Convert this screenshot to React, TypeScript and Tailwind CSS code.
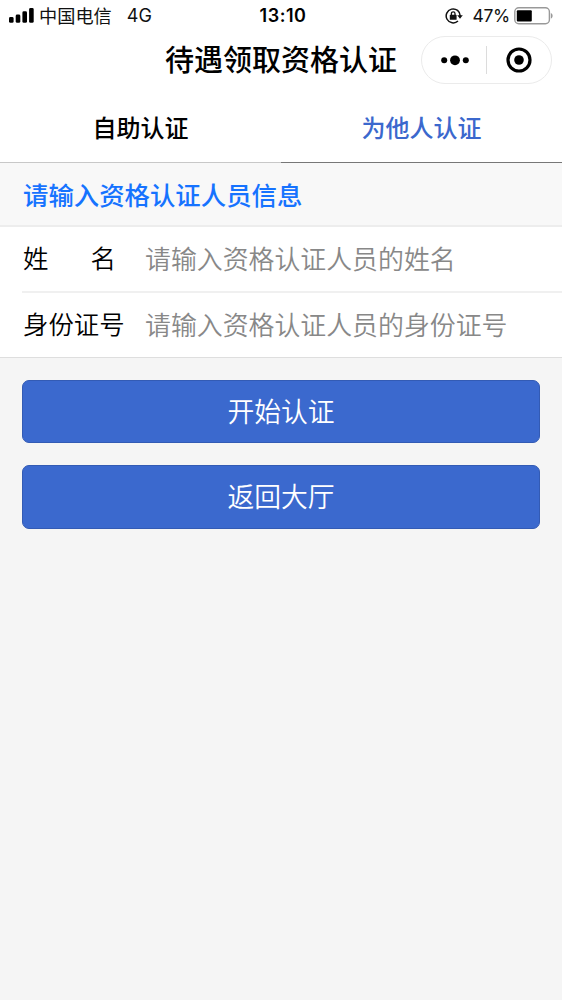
import React from 'react';

const fields = [
  { id: 'name', label: ['姓', '名'], placeholder: '请输入资格认证人员的姓名' },
  { id: 'idNumber', label: ['身份证号'], placeholder: '请输入资格认证人员的身份证号' },
];

const StatusBar: React.FC = () => (
  <div className="h-8 flex items-center justify-between pl-[9px] pr-2 text-[18px] leading-8 text-[#111]">
    <div className="w-[240px] flex items-center">
      <svg width="25" height="16" viewBox="0 0 25 16" fill="#000">
        <rect x="0" y="9" width="4.6" height="5.8" rx="1.4" />
        <rect x="6.7" y="6.5" width="4.6" height="8.3" rx="1.4" />
        <rect x="13.4" y="3.3" width="4.6" height="11.5" rx="1.4" />
        <rect x="20.1" y="0" width="4.6" height="14.8" rx="1.4" />
      </svg>
      <span className="ml-[5px] text-[18.2px]">中国电信</span>
      <span className="ml-[15px] text-[18px]">4G</span>
    </div>
    <span className="pl-[3px] text-[18px] font-semibold text-black tracking-[0.5px]">13:10</span>
    <div className="w-[240px] flex items-center justify-end">
      <svg className="-mt-px" width="18" height="16" viewBox="0 0 18 16" fill="none" stroke="#111" strokeWidth="1.5">
        <path d="M15.2 8.5V8A7 7 0 1 0 13 13" />
        <path d="M12.2 7.2h5.6L15 10.7z" fill="#111" stroke="none" />
        <rect x="4.8" y="6.8" width="6.8" height="5" rx="0.6" fill="#111" stroke="none" />
        <path d="M6.4 7.2V5.6a1.8 1.8 0 0 1 3.6 0v1.6" strokeWidth="1.3" />
      </svg>
      <span className="ml-[9px] text-[17.5px] tracking-[-0.3px]">47%</span>
      <svg className="ml-1 -mt-px" width="40" height="18" viewBox="0 0 40 18">
        <rect x="0.8" y="0.8" width="34.6" height="16" rx="4" fill="#fff" stroke="#999" strokeWidth="1.4" />
        <rect x="2.8" y="3.2" width="15" height="11.2" rx="1" fill="#000" />
        <path d="M36.8 6c2.4 0.8 2.4 4.8 0 5.6z" fill="#999" />
      </svg>
    </div>
  </div>
);

const NavBar: React.FC = () => (
  <header className="h-[58px] flex items-start justify-end pr-[10px]">
    <h1 className="mr-6 h-[58px] text-[29px] leading-[58px] font-medium whitespace-nowrap">待遇领取资格认证</h1>
    <div className="mt-1 w-[131px] h-12 flex items-center rounded-full border border-[#ebebeb]">
      <button className="w-16 flex justify-center pl-[2px]" aria-label="更多">
        <svg width="28" height="12" viewBox="0 0 28 12">
          <circle cx="3.2" cy="6.3" r="3" />
          <circle cx="14" cy="6.3" r="4.9" />
          <circle cx="24.8" cy="6.3" r="3" />
        </svg>
      </button>
      <span className="w-px h-7 bg-[#dcdcdc]" />
      <button className="w-16 flex justify-center" aria-label="关闭">
        <svg width="26" height="26" viewBox="0 0 26 26">
          <circle cx="13" cy="13" r="11" fill="none" stroke="#000" strokeWidth="3.2" />
          <circle cx="13" cy="13" r="4.8" />
        </svg>
      </button>
    </div>
  </header>
);

const App: React.FC = () => {
  return (
    <div className="h-[1000px] w-[562px] overflow-hidden bg-[#f5f5f5] text-black font-['Inter','Noto_Sans_CJK_SC',sans-serif]">
      <div className="bg-white">
        <StatusBar />
        <NavBar />
        <nav className="h-[73px] flex text-[24px] leading-[76px] text-center font-medium">
          <button className="w-[281px] pt-px border-b border-[#c8c8c8]">自助认证</button>
          <button className="w-[281px] pt-px border-b border-[#777] text-[#3b68cd]">为他人认证</button>
        </nav>
      </div>

      <h2 className="h-16 bg-[#f8f8f8] border-b-2 border-[#ededed] pl-[23px] text-[25.4px] leading-[65px] font-medium text-[#1673ff]">
        请输入资格认证人员信息
      </h2>

      <form className="bg-white border-b border-[#dedede] pl-[22px]">
        {fields.map((field, i) => (
          <div
            key={field.id}
            className={`flex items-center pt-px text-[25.4px] ${i === 0 ? 'h-[66px] border-b-2 border-[#f0f0f0]' : 'h-16'}`}
          >
            <label htmlFor={field.id} className={`flex justify-between pl-px font-[350] ${i === 0 ? 'w-[94px] mr-[29px]' : 'w-[102px] mr-[21px]'}`}>
              {field.label.map((part) => (
                <span key={part} className="whitespace-nowrap">{part}</span>
              ))}
            </label>
            <input
              id={field.id}
              className="flex-1 min-w-0 pt-px bg-transparent text-[25.9px] font-[350] outline-none placeholder:text-[#888]"
              placeholder={field.placeholder}
            />
          </div>
        ))}
      </form>

      <div className="flex flex-col gap-[22px] px-[22px] pt-[22px]">
        <button className="h-[63px] pt-[2px] rounded-[7px] border border-[#335bb4] bg-[#3b69ce] text-[26.8px] font-[350] text-white">
          开始认证
        </button>
        <button className="h-[64px] pt-px rounded-[7px] border border-[#335bb4] bg-[#3b69ce] text-[26.8px] font-[350] text-white">
          返回大厅
        </button>
      </div>
    </div>
  );
};

export default App;
